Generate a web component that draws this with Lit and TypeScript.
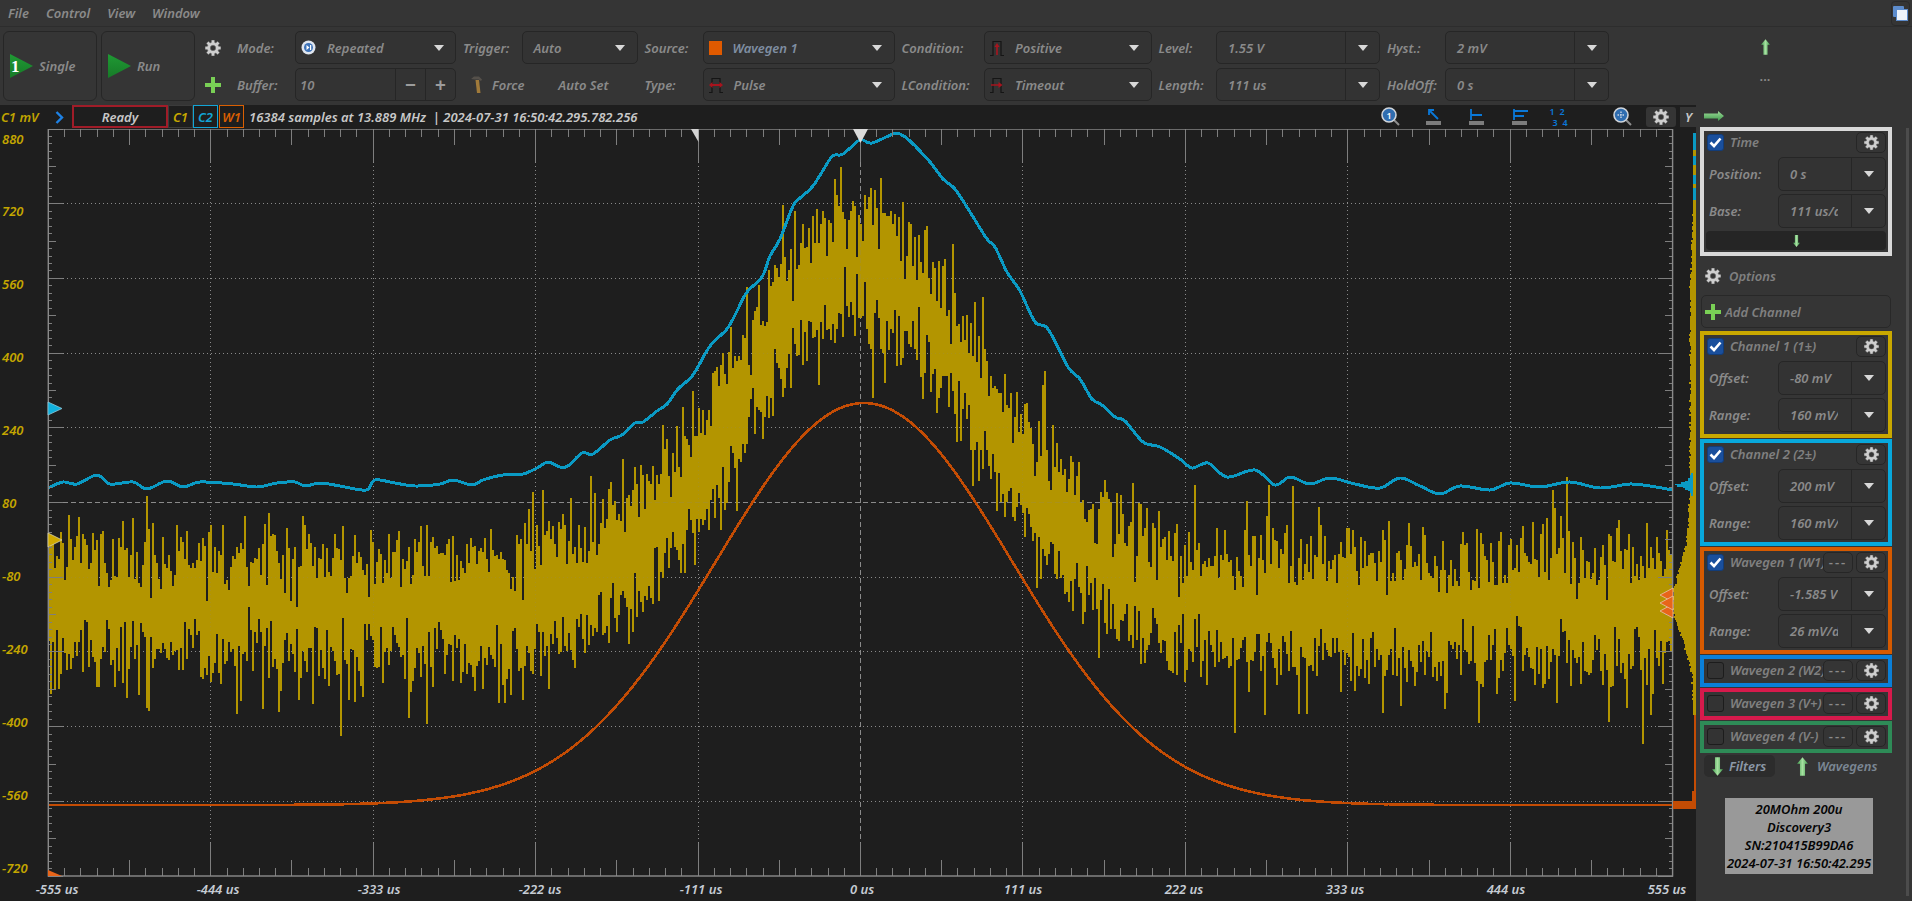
import { LitElement, html, css, svg } from "lit";
import { customElement } from "lit/decorators.js";

const X0 = 48.3, X1 = 1672.6, Y0 = 129, Y1 = 876;
const XC = (X0 + X1) / 2;

function rng(seed: number) {
  let a = seed >>> 0;
  return () => {
    a = (a + 0x6d2b79f5) | 0;
    let t = Math.imul(a ^ (a >>> 15), 1 | a);
    t = (t + Math.imul(t ^ (t >>> 7), 61 | t)) ^ t;
    return ((t ^ (t >>> 14)) >>> 0) / 4294967296;
  };
}

const BLUE: [number, number][] = [
  [48,488],[63,482],[77,484],[97,475],[110,484],[133,482],[147,489],[167,481],[183,487],[200,482],[233,484],[257,487],[277,483],[295,482],[305,486],[320,483],[340,486],[366,490],[375,480],[395,483],[415,486],
  [440,484],[453,480],[472,485],[483,480],[503,475],[523,474],[537,468],[548,462],[560,467],[568,466],[582,453],[593,454],[610,440],[622,435],[635,423],[643,422],[657,411],[667,404],[678,389],[693,375],[710,346],[727,329],[737,311],[747,292],[762,277],[770,256],[780,239],[793,206],[800,198],[813,186],[830,159],[835,155],[843,154],[858,141],
  [863,140],[872,143],[893,134],[900,134],[910,141],[930,162],[943,179],[955,189],[970,212],[987,239],[995,247],[1007,272],[1020,291],[1035,322],[1048,329],[1068,367],[1080,379],[1092,399],[1102,405],[1115,417],[1125,421],[1143,442],[1160,447],[1180,459],[1192,468],[1208,463],[1227,477],[1255,470],[1275,485],[1290,477],
  [1310,484],[1330,478],[1355,484],[1380,488],[1400,478],[1420,486],[1440,494],[1460,486],[1490,490],[1510,483],[1540,487],[1570,482],[1600,488],[1630,484],[1650,486],[1672,490],
];

function smooth(p: [number, number][]) {
  let d = `M${p[0][0]} ${p[0][1]}`;
  for (let i = 0; i < p.length - 1; i++) {
    const a = p[Math.max(i - 1, 0)], b = p[i], c = p[i + 1], e = p[Math.min(i + 2, p.length - 1)];
    d += `C${(b[0] + (c[0] - a[0]) / 6).toFixed(1)} ${(b[1] + (c[1] - a[1]) / 6).toFixed(1)} ${(c[0] - (e[0] - b[0]) / 6).toFixed(1)} ${(c[1] - (e[1] - b[1]) / 6).toFixed(1)} ${c[0]} ${c[1]}`;
  }
  return d;
}

function noisePath() {
  const r = rng(77123);
  const g = () => Math.sqrt(-2 * Math.log(r() + 1e-9)) * Math.cos(2 * Math.PI * r());
  let d = "";
  const step = 2;
  for (let x = Math.round(X0) + 1; x < X1; x += step) {
    const c = 607 - 347 * Math.exp(-((x - 860) ** 2) / (2 * 120 * 120));
    const n = 7 + Math.floor(r() * 12);
    let lo = 0, hi = 0;
    for (let i = 0; i < n; i++) {
      const tail = r() < 0.04 ? 1.4 : 1;
      const v = g() * 33 * tail;
      if (v < lo) lo = v;
      if (v > hi) hi = v;
    }
    if (r() < 0.1) lo = Math.min(lo * 0.45, -4);
    else if (r() < 0.1) hi = Math.max(hi * 0.45, 4);
    d += `M${x} ${Math.min(Y1, c + lo).toFixed(1)}V${Math.min(Y1, c + hi).toFixed(1)}`;
  }
  return d;
}

function orangePath() {
  let d = "";
  for (let x = X0; x <= X1; x += 2) {
    const y = 805 - 402 * Math.exp(-((x - 864) ** 2) / (2 * 148 * 148));
    d += `${d ? "L" : "M"}${x.toFixed(1)} ${y.toFixed(1)}`;
  }
  return d;
}

function ticks() {
  let d = "";
  for (let i = 0; i <= 100; i++) {
    const x = X0 + (i * (X1 - X0)) / 100;
    const l = i % 10 === 0 ? 33 : i % 5 === 0 ? 16 : 8;
    d += `M${x.toFixed(1)} ${Y0}v${l}M${x.toFixed(1)} ${Y1}v${-l}`;
    const y = Y0 + (i * (Y1 - Y0)) / 100;
    const m = i % 10 === 0 ? 15 : i % 5 === 0 ? 8 : 4;
    d += `M${X0} ${y.toFixed(1)}h${m}M${X1} ${y.toFixed(1)}h${-m}`;
  }
  return d;
}

function gridDots() {
  let d = "";
  for (let i = 1; i < 10; i++) {
    if (i === 5) continue;
    const x = X0 + (i * (X1 - X0)) / 10;
    d += `M${x.toFixed(1)} ${Y0 + 33}V${Y1 - 33}`;
    const y = Y0 + (i * (Y1 - Y0)) / 10;
    d += `M${X0 + 15} ${y.toFixed(1)}H${X1 - 15}`;
  }
  return d;
}

function histYellow() {
  const k: [number, number][] = [[200,1694],[220,1693],[287,1690],[420,1690],[500,1689],[540,1687],[557,1682],[590,1673.5],[610,1673],[623,1677],[640,1683],[673,1692],[707,1693],[715,1695]];
  const r = rng(991);
  let d = "";
  for (let y = 200; y < 715; y += 2) {
    let i = 0;
    while (i < k.length - 2 && k[i + 1][0] < y) i++;
    const t = (y - k[i][0]) / (k[i + 1][0] - k[i][0]);
    const x = k[i][1] + (k[i + 1][1] - k[i][1]) * t + (r() - 0.5) * 2.2;
    d += `M${Math.max(1673, x).toFixed(1)} ${y}H1696V${y + 2}H${Math.max(1673, x).toFixed(1)}Z`;
  }
  return d;
}

function histBlue() {
  const r = rng(55);
  let d = "";
  for (let y = 473; y < 495; y += 1.5) {
    const w = 20 * Math.exp(-Math.abs(y - 484) / 3.5) + r() * 2;
    d += `M${1693 - w} ${y}H1693V${y + 1.5}H${1693 - w}Z`;
  }
  return d;
}

function gearPath(size: number) {
  const c = size / 2, R = size / 2, r = size * 0.36, h = size * 0.17;
  let d = "";
  const n = 8;
  for (let i = 0; i < n; i++) {
    const a = (i * 2 * Math.PI) / n - Math.PI / 2;
    const w = Math.PI / n;
    const pts = [[r, a - w * 0.75], [R, a - w * 0.42], [R, a + w * 0.42], [r, a + w * 0.75]];
    for (const [rad, ang] of pts) {
      d += `${d ? "L" : "M"}${(c + rad * Math.cos(ang)).toFixed(2)} ${(c + rad * Math.sin(ang)).toFixed(2)}`;
    }
  }
  d += `ZM${c - h} ${c}a${h} ${h} 0 1 0 ${2 * h} 0a${h} ${h} 0 1 0 ${-2 * h} 0Z`;
  return d;
}

const gear = (s = 16) => html`<svg class="ico" width=${s} height=${s} viewBox="0 0 ${s} ${s}"><path d=${gearPath(s)} fill="#cfcfcf" fill-rule="evenodd" stroke="#777" stroke-width=".5"/></svg>`;
const plus = () => html`<svg class="ico" width="16" height="16" viewBox="0 0 16 16"><path d="M6 0h4v6h6v4h-6v6H6v-6H0V6h6z" fill="#79cf55"/></svg>`;
const arrowUp = (w = 10, h = 17) => html`<svg class="ico" width=${w} height=${h} viewBox="0 0 10 17"><defs><linearGradient id="gv" x1="0" x2="1" y1="0" y2="0"><stop offset="0" stop-color="#3f9a4c"/><stop offset=".5" stop-color="#a5e0a0"/><stop offset="1" stop-color="#3f9a4c"/></linearGradient></defs><path d="M5 0l5 6H7.3v11H2.7V6H0z" fill="url(#gv)"/></svg>`;
const arrowDown = (w = 10, h = 17) => html`<svg class="ico" width=${w} height=${h} viewBox="0 0 10 17"><path d="M5 17l5-6H7.3V0H2.7v11H0z" fill="url(#gv)"/></svg>`;
const arrowRight = () => html`<svg class="ico" width="20" height="10" viewBox="0 0 20 10"><defs><linearGradient id="gh" x1="0" x2="0" y1="0" y2="1"><stop offset="0" stop-color="#9fdc9a"/><stop offset="1" stop-color="#3f9a4c"/></linearGradient></defs><path d="M20 5l-6 5V7.4H0V2.6h14V0z" fill="url(#gh)"/></svg>`;
const play = () => html`<svg class="ico" width="23" height="24" viewBox="0 0 23 24"><defs><linearGradient id="gp" x1="0" x2="0" y1="0" y2="1"><stop offset="0" stop-color="#1f9a34"/><stop offset="1" stop-color="#177a28"/></linearGradient></defs><path d="M0 0l23 12L0 24z" fill="url(#gp)"/></svg>`;
const pulse = (arrow: string) => html`<svg class="ico" width="14" height="16" viewBox="0 0 14 16"><path d="M0 15.5H3V1.5H11V15.5H14" fill="none" stroke="#151515" stroke-width="1.2"/><path d=${arrow} fill="#a8141e"/></svg>`;
const PULSE_UP = "M7 3l2.6 4H7.8v8H6.2V7H4.4z";
const PULSE_BOTH = "M0 8l3.5-3v2h7V5L14 8l-3.5 3V9h-7v2z";
const PULSE_RIGHT = "M1 7.2h7.5V5l4 3-4 3V8.8H1z";

const barIcon = (d: string, blue = "#0a78d8") => html`<svg class="ico" width="16" height="17" viewBox="0 0 16 17"><path d=${d} fill="none" stroke=${blue} stroke-width="1.8"/><rect x="0" y="12" width="15" height="4" fill="#7d7d7d"/></svg>`;

const magnifier = (inner: unknown) => html`<svg class="ico" width="20" height="20" viewBox="0 0 20 20"><path d="M12 12l6 6" stroke="#8e8e8e" stroke-width="2"/><circle cx="8" cy="8" r="7" fill="#2f6db0" stroke="#cfd4da" stroke-width="1.6"/>${inner}</svg>`;

@customElement("app-root")
export class AppRoot extends LitElement {
  static styles = css`
    :host { display: block; width: 1912px; height: 901px; overflow: hidden; background: #353535; font: italic 600 13px "Noto Sans", "Open Sans", sans-serif; color: #8a8a8a; }
    .ico { display: block; flex: none; }
    .menu { height: 27px; display: flex; align-items: center; gap: 17px; padding: 0 2px 0 8px; border-bottom: 1px solid #2d2d2d; box-sizing: border-box; position: relative; }
    .win { margin-left: auto; width: 19px; height: 25px; border: 1px solid #2a2a2a; border-radius: 4px; display: flex; align-items: center; justify-content: center; box-sizing: border-box; }
    .tools { height: 78px; box-sizing: border-box; padding: 4px 0 0 3px; display: grid; grid-template-rows: 33px 33px; row-gap: 4px;
      grid-template-columns: 94px 4px 94px 42px 58px 161px 65.5px 116px 65px 192px 89.5px 167.5px 64.5px 164px 65px 164px 1fr; }
    .big { grid-row: 1 / span 2; border: 1px solid #262626; border-radius: 6px; display: flex; align-items: center; position: relative; padding-left: 6px; gap: 6px; box-sizing: border-box; }
    .big.one { grid-column: 1; } .big.two { grid-column: 3; }
    .one-mark { position: absolute; left: 7px; top: 25px; color: #fff; font: 700 17px "Liberation Serif", serif; }
    .cc { display: flex; align-items: center; justify-content: center; width: 36px; grid-column: 4; }
    .lab { display: flex; align-items: center; padding-left: 7px; white-space: nowrap; }
    .lab.z { padding-left: 0; }
    .combo { display: flex; align-items: center; border: 1px solid #262626; border-radius: 5px; background: #333; box-sizing: border-box; min-width: 0; }
    .val { flex: 1; min-width: 0; overflow: hidden; white-space: nowrap; padding-left: 11px; }
    .val.b { color: #7f8ea2; }
    .val.s { padding-left: 4px; }
    .arr { width: 33px; height: 100%; display: flex; align-items: center; justify-content: center; flex: none; }
    .arr::after { content: ""; border-left: 5px solid transparent; border-right: 5px solid transparent; border-top: 6px solid #d8d8d8; }
    .arr.d { border-left: 1px solid #262626; }
    .pm { width: 29px; height: 100%; border-left: 1px solid #262626; display: flex; align-items: center; justify-content: center; font-size: 19px; font-style: normal; font-weight: 700; color: #9c9c9c; flex: none; }
    .iconslot { margin-left: 5px; }
    .force { grid-column: 7 / span 2; display: flex; align-items: center; padding-left: 13px; gap: 8px; }
    .force .as { margin-left: 26px; }
    .end { display: flex; flex-direction: column; align-items: center; grid-row: 1 / span 2; grid-column: 17; width: 312px; padding-top: 8px; }
    .dots { margin-top: 12px; font-style: normal; }
    .main { display: flex; height: 796px; }
    .left { width: 1696px; flex: none; background: #1e1e1e; }
    .status { height: 24px; display: flex; align-items: center; color: #c8c8c8; margin-right: -6px; position: relative; z-index: 1; }
    .chan { width: 47px; color: #c0a400; padding-left: 1px; flex: none; white-space: nowrap; box-sizing: border-box; }
    .chev { width: 25px; flex: none; display: flex; justify-content: center; }
    .ready { width: 96px; height: 23px; box-sizing: border-box; border: 2px solid #a01c28; display: flex; align-items: center; justify-content: center; flex: none; margin-top: -1px; }
    .tag { width: 25px; height: 23px; box-sizing: border-box; display: flex; align-items: center; justify-content: center; border: 1px solid #3b3b3b; flex: none; margin-top: -1px; }
    .tag.c1 { color: #c8a800; } .tag.c2 { color: #12a5d6; border-color: #12a5d6; } .tag.w1 { color: #d95f02; border-color: #d95f02; margin-left: 1px; }
    .info { padding-left: 5px; white-space: pre; flex: none; }
    .sicons { margin-left: auto; display: flex; align-items: center; }
    .si { width: 43px; display: flex; justify-content: center; align-items: center; }
    .si.gapb { margin-left: 17px; }
    .nums { display: grid; grid-template-columns: 10px 10px; font-size: 9px; line-height: 11px; color: #0a78d8; font-style: normal; margin-right: 6px; }
    .nums span:nth-child(n+3) { transform: translateX(3px); }
    .sgear { width: 30px; height: 20px; background: #353535; border-radius: 3px; display: flex; align-items: center; justify-content: center; margin-left: 2px; }
    .ybox { width: 22px; height: 20px; background: #353535; margin-left: 4px; padding-left: 5px; box-sizing: border-box; display: flex; align-items: center; }
    .plot { display: block; width: 1696px; height: 772px; }
    .plot text { font: italic 600 13px "Noto Sans", "Open Sans", sans-serif; }
    .side { width: 216px; flex: none; box-sizing: border-box; padding: 22px 0 0 4px; position: relative; display: flex; flex-direction: column; }
    .gohide { position: absolute; left: 8px; top: 6px; }
    .scroll { position: absolute; left: 210px; top: 23px; bottom: 5px; width: 3px; background: #4c4c4c; }
    .col { width: 192px; display: flex; flex-direction: column; }
    .frame { border: 4px solid; box-sizing: border-box; padding: 0 2px; margin-bottom: 1px; display: flex; flex-direction: column; flex: none; }
    .f-time { border-color: #d9d9d9; margin-bottom: 0; height: 129px; } .f-c1 { border-color: #c9a800; height: 107px; } .f-c2 { border-color: #08a8dc; height: 107px; } .f-w1 { border-color: #d65a00; height: 107px; }
    .f-w2 { border-color: #0a7fd8; height: 32px; } .f-w3 { border-color: #d61a4c; height: 32px; } .f-w4 { border-color: #2e8b57; height: 32px; margin-bottom: 2px; }
    .head { height: 22px; display: flex; align-items: center; margin-bottom: 4px; flex: none; }
    .chk { width: 17px; height: 17px; margin-left: 1px; border-radius: 3px; background: #1a4f9c; border: 1px solid #123c78; box-sizing: border-box; display: flex; align-items: center; justify-content: center; flex: none; }
    .chk.off { background: #333; border-color: #1c1c1c; }
    .title { flex: 1; min-width: 0; overflow: hidden; white-space: nowrap; margin-left: 6px; color: #808080; }
    .hb { width: 30px; height: 21px; border: 1px solid #262626; border-radius: 5px; box-sizing: border-box; display: flex; align-items: center; justify-content: center; flex: none; }
    .hb.dash { margin-right: 3px; font-style: normal; letter-spacing: 2px; }
    .row { height: 34px; display: flex; align-items: center; margin-bottom: 3px; flex: none; }
    .rl { width: 72px; padding-left: 3px; box-sizing: border-box; flex: none; }
    .row .combo { width: 108px; height: 34px; }
    .row .val { margin-right: 13px; }
    .row .arr { width: 33px; }
    .trk { height: 19px; background: #252525; border-radius: 4px; display: flex; justify-content: center; align-items: center; flex: none; }
    .opt { height: 39px; display: flex; align-items: center; padding-left: 5px; gap: 8px; color: #808080; }
    .add { height: 33px; width: 190px; margin: 0 1px 3px; box-sizing: border-box; border: 1px solid #282828; border-radius: 5px; display: flex; align-items: center; padding-left: 3px; gap: 4px; color: #808080; }
    .tabs { height: 22px; display: flex; align-items: center; margin-bottom: 21px; }
    .filt { width: 71px; height: 22px; margin-left: 4px; box-sizing: border-box; background: #2c2c2c; border-radius: 5px; display: flex; align-items: center; padding-left: 8px; gap: 6px; color: #8d99a8; }
    .wg { display: flex; align-items: center; margin-left: 22px; gap: 9px; color: #7b8794; }
    .card { margin-left: 25px; width: 148px; height: 76px; background: #999; color: #050505; text-align: center; line-height: 18px; padding-top: 2px; box-sizing: border-box; white-space: nowrap; }
  `;

  private combo(text: string, opts: { split?: boolean; cls?: string; icon?: unknown } = {}) {
    return html`<div class="combo">${opts.icon ? html`<div class="iconslot">${opts.icon}</div>` : ""}<div class="val ${opts.cls ?? ""}">${text}</div><div class="arr ${opts.split ? "d" : ""}"></div></div>`;
  }

  private frame(cls: string, title: string, checked: boolean, dash: boolean, rows?: [string, string][], track = false) {
    return html`<div class="frame ${cls}">
      <div class="head">
        <div class="chk ${checked ? "" : "off"}">${checked ? html`<svg width="13" height="11" viewBox="0 0 13 11"><path d="M1.5 5.5L5 9l6.5-7.5" fill="none" stroke="#fff" stroke-width="2.6"/></svg>` : ""}</div>
        <div class="title">${title}</div>
        ${dash ? html`<div class="hb dash">---</div>` : ""}
        <div class="hb">${gear(15)}</div>
      </div>
      ${(rows ?? []).map(([l, v]) => html`<div class="row"><div class="rl">${l}</div><div class="combo"><div class="val">${v}</div><div class="arr d"></div></div></div>`)}
      ${track ? html`<div class="trk">${arrowDown(7, 14)}</div>` : ""}
    </div>`;
  }

  private plot() {
    const yl = ["880", "720", "560", "400", "240", "80", "-80", "-240", "-400", "-560", "-720"];
    const xl = ["-555 us", "-444 us", "-333 us", "-222 us", "-111 us", "0 us", "111 us", "222 us", "333 us", "444 us", "555 us"];
    const grid = svg`
      <path d=${gridDots()} stroke="#8a8a8a" stroke-width="1" stroke-dasharray="1 3" fill="none" shape-rendering="crispEdges"/>
      <path d="M${XC} ${Y0 + 33}V${Y1 - 33}M${X0 + 15} ${(Y0 + Y1) / 2}H${X1 - 15}" stroke="#8a8a8a" stroke-width="1" stroke-dasharray="5 3" fill="none" shape-rendering="crispEdges"/>`;
    return html`<svg class="plot" viewBox="0 129 1696 772">
      ${grid}
      <path d=${noisePath()} stroke="#b39500" stroke-width="2" fill="none" shape-rendering="crispEdges"/>
      <g opacity=".2">${grid}</g>
      <path d=${orangePath()} stroke="#c44c04" stroke-width="2.600" fill="none" shape-rendering="crispEdges"/>
      <path d=${smooth(BLUE)} stroke="#0a9ac4" stroke-width="3" fill="none" shape-rendering="crispEdges"/>
      <path d=${ticks()} stroke="#7e7e7e" stroke-width="1" fill="none" shape-rendering="crispEdges"/>
      <rect x=${X0} y=${Y0} width=${X1 - X0} height=${Y1 - Y0} fill="none" stroke="#8a8a8a" stroke-width="1.4"/>
      <path d=${histYellow()} fill="#b39500" shape-rendering="crispEdges"/>
      <rect x="1693" y="200" width="3" height="515" fill="#b39500"/>
      <rect x="1693" y="133" width="3" height="67" fill="#0a9ac4"/>
      <rect x="1693" y="150" width="3" height="6" fill="#b39500"/><rect x="1693" y="165" width="3" height="10" fill="#b39500"/><rect x="1693" y="184" width="3" height="4" fill="#b39500"/>
      <path d=${histBlue()} fill="#0a9ac4" shape-rendering="crispEdges"/>
      <rect x="1694" y="715" width="2" height="60" fill="#c44c04"/>
      <path d="M1692 791h4v10h-4zM1694 773h2v20h-2zM1673 801h23v8h-23z" fill="#c44c04"/>
      <path d="M48 402l14 6.500-14 6.500z" fill="#12b0dc" stroke="#8fc8d8" stroke-width=".8"/>
      <path d="M48 533l14 7-14 7z" fill="#d0aa00" stroke="#d8d0a8" stroke-width=".8"/>
      <path d="M48 870l14 6H48z" fill="#e8651a"/>
      <path d="M1673 588l-13 7 13 7zM1673 604l-13 7 13 7z" fill="#e8651a" stroke="#e6c4a8" stroke-width=".8"/>
      <path d="M1673 596l-13 7 13 7z" fill="#e8651a" stroke="#e6c4a8" stroke-width=".8"/>
      <path d="M691 129h7.500v13z" fill="#d4d4d4"/>
      <path d="M853 129h15l-7.500 14z" fill="#dadada"/>
      ${yl.map((t, i) => svg`<text x="2" y=${143.500 + i * 72.9} fill="#c4a600">${t}</text>`)}
      ${xl.map((t, i) => svg`<text x=${57 + i * 161} y="893.500" text-anchor="middle" fill="#c6ccd4">${t}</text>`)}
    </svg>`;
  }

  render() {
    return html`
      <div class="menu">
        <span>File</span><span>Control</span><span>View</span><span>Window</span>
        <div class="win"><svg width="15" height="15" viewBox="0 0 15 15"><rect x="0" y="0" width="11" height="11" fill="#5d8ccc" rx="1"/><rect x="3.500" y="3.500" width="11" height="11" fill="#eef3fa" stroke="#5d8ccc" stroke-width="1"/></svg></div>
      </div>
      <div class="tools">
        <div class="big one">${play()}<span>Single</span><span class="one-mark">1</span></div>
        <div class="big two">${play()}<span>Run</span></div>
        <div class="cc">${gear(16)}</div>
        <div class="lab z">Mode:</div>
        ${this.combo("Repeated", { icon: html`<svg class="ico" width="15" height="15" viewBox="0 0 15 15"><circle cx="7.500" cy="7.500" r="7" fill="#dfe5ee"/><circle cx="7.500" cy="7.500" r="4.500" fill="#3d72b8"/><path d="M5.500 5l3 2.500-3 2.500zM9 5h1.200v5H9z" fill="#fff"/></svg>` })}
        <div class="lab">Trigger:</div>
        ${this.combo("Auto")}
        <div class="lab">Source:</div>
        ${this.combo("Wavegen 1", { cls: "b", icon: html`<svg class="ico" width="13" height="14" viewBox="0 0 13 14"><rect width="13" height="14" fill="#e05a00"/></svg>` })}
        <div class="lab">Condition:</div>
        ${this.combo("Positive", { icon: pulse(PULSE_UP) })}
        <div class="lab">Level:</div>
        ${this.combo("1.55 V", { split: true })}
        <div class="lab">Hyst.:</div>
        ${this.combo("2 mV", { split: true })}
        <div class="end">${arrowUp(9, 16)}<div class="dots">...</div></div>

        <div class="cc">${plus()}</div>
        <div class="lab z">Buffer:</div>
        <div class="combo"><div class="val s">10</div><div class="pm">−</div><div class="pm">+</div></div>
        <div class="force"><svg class="ico" width="15" height="17" viewBox="0 0 15 17"><path d="M6.500 4h3.500l1.500 13h-3.500z" fill="#a07a3a"/><path d="M2 3l3-2.500h5l3 3-1 1.500-2.500-1.500H5.500z" fill="#55504a"/></svg><span>Force</span><span class="as">Auto Set</span></div>
        <div class="lab">Type:</div>
        ${this.combo("Pulse", { icon: pulse(PULSE_BOTH) })}
        <div class="lab">LCondition:</div>
        ${this.combo("Timeout", { icon: pulse(PULSE_RIGHT) })}
        <div class="lab">Length:</div>
        ${this.combo("111 us", { split: true })}
        <div class="lab">HoldOff:</div>
        ${this.combo("0 s", { split: true })}
      </div>
      <div class="main">
        <div class="left">
          <div class="status">
            <div class="chan">C1 mV</div>
            <div class="chev"><svg width="9" height="13" viewBox="0 0 9 13"><path d="M1.500 1l5.500 5.500L1.500 12" fill="none" stroke="#1e82e6" stroke-width="2.400"/></svg></div>
            <div class="ready">Ready</div>
            <div class="tag c1">C1</div><div class="tag c2">C2</div><div class="tag w1">W1</div>
            <div class="info">16384 samples at 13.889 MHz  | 2024-07-31 16:50:42.295.782.256</div>
            <div class="sicons">
              <div class="si">${magnifier(svg`<text x="8" y="11.500" text-anchor="middle" fill="#fff" font-size="9" font-style="normal">1</text>`)}</div>
              <div class="si">${barIcon("M12 10L3 1M3 6V1h5")}</div>
              <div class="si">${barIcon("M2 0v11M2 6h11")}</div>
              <div class="si">${barIcon("M2 0v11M2 2h14M2 7h10")}</div>
              <div class="si"><div class="nums"><span>1</span><span>2</span><span>3</span><span>4</span></div></div>
              <div class="si gapb">${magnifier(svg`<path d="M4.500 8h7M8 4.500v7" stroke="#c8d4e4" stroke-width="1.400" stroke-dasharray="1.500 1"/>`)}</div>
              <div class="sgear">${gear(16)}</div>
              <div class="ybox">Y</div>
            </div>
          </div>
          ${this.plot()}
        </div>
        <div class="side">
          <div class="gohide">${arrowRight()}</div>
          <div class="scroll"></div>
          <div class="col">
            ${this.frame("f-time", "Time", true, false, [["Position:", "0 s"], ["Base:", "111 us/div"]], true)}
            <div class="opt">${gear(16)}<span>Options</span></div>
            <div class="add">${plus()}<span>Add Channel</span></div>
            ${this.frame("f-c1", "Channel 1 (1±)", true, false, [["Offset:", "-80 mV"], ["Range:", "160 mV/div"]])}
            ${this.frame("f-c2", "Channel 2 (2±)", true, false, [["Offset:", "200 mV"], ["Range:", "160 mV/div"]])}
            ${this.frame("f-w1", "Wavegen 1 (W1)", true, true, [["Offset:", "-1.585 V"], ["Range:", "26 mV/div"]])}
            ${this.frame("f-w2", "Wavegen 2 (W2)", false, true)}
            ${this.frame("f-w3", "Wavegen 3 (V+)", false, true)}
            ${this.frame("f-w4", "Wavegen 4 (V-)", false, true)}
            <div class="tabs">
              <div class="filt">${arrowDown(11, 19)}<span>Filters</span></div>
              <div class="wg">${arrowUp(11, 19)}<span>Wavegens</span></div>
            </div>
            <div class="card">20MOhm 200u<br/>Discovery3<br/>SN:210415B99DA6<br/>2024-07-31 16:50:42.295</div>
          </div>
        </div>
      </div>
    `;
  }
}
